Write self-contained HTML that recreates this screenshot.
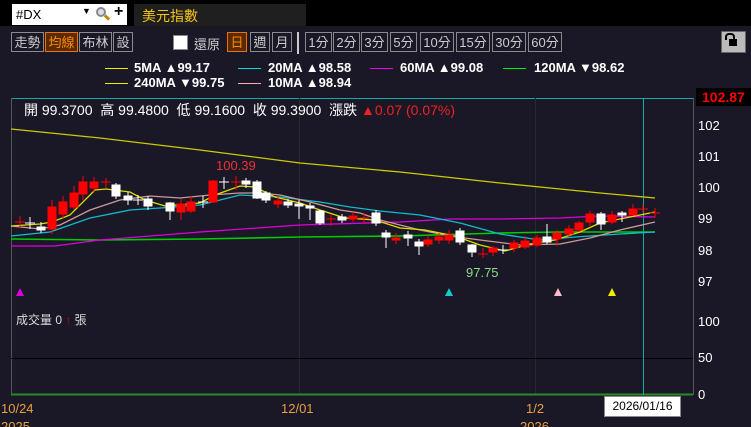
<!DOCTYPE html><html><head><meta charset="utf-8"><style>
body{margin:0;width:751px;height:427px;overflow:hidden;background:#1a1826;font-family:"Liberation Sans","Noto Sans CJK TC",sans-serif;}
.b{position:absolute;border:1px solid #8a8a8a;color:#ccc;font-size:13px;height:20px;line-height:20px;text-align:center;box-sizing:border-box;}
.t{position:absolute;color:#fff;font-size:13px;white-space:nowrap;}
.l{font-weight:bold;font-size:13px;}
</style></head><body>
<div style="position:absolute;left:0;top:0;width:751px;height:26px;background:#000"></div>
<div style="position:absolute;left:12px;top:4px;width:115px;height:21px;background:#fff;"></div>
<div class="t" style="left:16px;top:7px;color:#000;font-size:13px">#DX</div>
<div class="t" style="left:82px;top:6px;color:#000;font-size:9px">▼</div>
<div style="position:absolute;left:96px;top:7px;width:10px;height:10px;border:2px solid #888;border-radius:50%;box-sizing:border-box;background:#dde"></div>
<div style="position:absolute;left:104px;top:16px;width:6px;height:3px;background:#b80;transform:rotate(45deg)"></div>
<div class="t" style="left:114px;top:3px;color:#000;font-size:16px;font-weight:bold">+</div>
<div style="position:absolute;left:134px;top:4px;width:172px;height:22px;background:#1f1f1f"></div>
<div class="t" style="left:142px;top:6px;color:#f5c518;font-size:14px">美元指數</div>

<div class="b" style="left:11px;top:32px;width:33px">走勢</div>
<div class="b" style="left:45px;top:32px;width:33px;background:#5a2a00;border-color:#f07000;color:#ff8a00">均線</div>
<div class="b" style="left:79px;top:32px;width:33px">布林</div>
<div class="b" style="left:113px;top:32px;width:20px">設</div>
<div style="position:absolute;left:173px;top:35px;width:13px;height:13px;background:#fff;border:1px solid #888"></div>
<div class="t" style="left:194px;top:34px;color:#ccc">還原</div>
<div class="b" style="left:227px;top:32px;width:20px;background:#5a2a00;border-color:#f07000;color:#ff8a00">日</div>
<div class="b" style="left:250px;top:32px;width:20px">週</div>
<div class="b" style="left:272px;top:32px;width:20px">月</div>
<div style="position:absolute;left:297px;top:32px;width:2px;height:22px;background:#ccc"></div>
<div class="b" style="left:305px;top:32px;width:27px">1分</div>
<div class="b" style="left:333px;top:32px;width:27px">2分</div>
<div class="b" style="left:361px;top:32px;width:27px">3分</div>
<div class="b" style="left:390px;top:32px;width:27px">5分</div>
<div class="b" style="left:420px;top:32px;width:34px">10分</div>
<div class="b" style="left:456px;top:32px;width:34px">15分</div>
<div class="b" style="left:492px;top:32px;width:34px">30分</div>
<div class="b" style="left:528px;top:32px;width:34px">60分</div>
<div style="position:absolute;left:721px;top:31px;width:25px;height:22px;background:#bbb;border:1px solid #666;box-sizing:border-box"></div>
<div style="position:absolute;left:729px;top:39px;width:8px;height:7px;background:#000"></div>
<div style="position:absolute;left:725px;top:33px;width:6px;height:5px;border:2px solid #000;border-bottom:none;border-radius:4px 4px 0 0"></div>

<div style="position:absolute;left:105px;top:68px;width:23px;height:1px;background:#ee0"></div>
<div class="t l" style="left:134px;top:60px">5MA ▲99.17</div>
<div style="position:absolute;left:238px;top:68px;width:23px;height:1px;background:#0dd"></div>
<div class="t l" style="left:268px;top:60px">20MA ▲98.58</div>
<div style="position:absolute;left:370px;top:68px;width:23px;height:1px;background:#e0e"></div>
<div class="t l" style="left:400px;top:60px">60MA ▲99.08</div>
<div style="position:absolute;left:503px;top:68px;width:23px;height:1px;background:#0e0"></div>
<div class="t l" style="left:534px;top:60px">120MA ▼98.62</div>
<div style="position:absolute;left:105px;top:83px;width:23px;height:1px;background:#ee0"></div>
<div class="t l" style="left:134px;top:75px">240MA ▼99.75</div>
<div style="position:absolute;left:238px;top:83px;width:23px;height:1px;background:#fab"></div>
<div class="t l" style="left:268px;top:75px">10MA ▲98.94</div>

<svg style="position:absolute;left:0;top:0" width="751" height="427">
<line x1="11" y1="98.5" x2="693" y2="98.5" stroke="#1aa" />
<line x1="11.5" y1="98" x2="11.5" y2="395" stroke="#555"/>
<line x1="693.5" y1="98" x2="693.5" y2="395" stroke="#555"/>
<line x1="299.5" y1="98" x2="299.5" y2="395" stroke="#2a2a2a"/>
<line x1="535.5" y1="98" x2="535.5" y2="395" stroke="#2a2a2a"/>
<line x1="11" y1="358.5" x2="693" y2="358.5" stroke="#000"/>
<line x1="11" y1="394.5" x2="693" y2="394.5" stroke="#2a8a2a" stroke-width="2"/>
<line x1="643.5" y1="98" x2="643.5" y2="395" stroke="#1aa"/>
<g fill="none" stroke-width="1.3">
<polyline stroke="#cc0" points="11,129 100,138 200,150 300,163 400,172 500,183 550,188 600,193 655,198"/>
<polyline stroke="#0c0" stroke-width="1.6" points="11,239 100,240 200,239 300,237 400,236 500,233 560,232 655,232"/>
<polyline stroke="#d0d" points="11,246 55,246 100,240 200,232 300,225 400,222 450,219 500,219 560,218 600,216 655,217"/>
<polyline stroke="#1bc" points="11,236 50,232 90,218 130,210 160,208 200,205 240,195 280,197 320,202 350,207 380,211 420,215 460,223 500,234 540,240 575,237 620,234 655,232"/>
<polyline stroke="#c99" points="11,226 40,229 60,225 90,210 120,200 150,196 180,198 210,195 240,193 260,193 280,195 310,202 340,210 360,213 380,220 420,230 450,236 480,240 520,245 560,244 590,238 620,230 655,222"/>
<polyline stroke="#dd0" points="11,226 40,224 52,222 70,215 95,190 106,189 130,192 145,200 165,206 200,203 215,195 240,186 255,187 275,197 300,203 320,210 345,218 360,219 375,220 400,228 425,230 455,236 480,245 505,251 530,244 555,240 580,232 600,223 625,218 655,212"/>
</g>
<g stroke-width="1">
<g fill="#f00" stroke="#f00">
<line x1="20" y1="216" x2="20" y2="228"/><line x1="15" y1="222" x2="25" y2="222"/>
<line x1="52" y1="200" x2="52" y2="234"/><rect x="48" y="207" width="8" height="22"/>
<line x1="63" y1="196" x2="63" y2="219"/><rect x="59" y="202" width="8" height="12"/>
<line x1="74" y1="186" x2="74" y2="210"/><rect x="70" y="193" width="8" height="14"/>
<line x1="83" y1="176" x2="83" y2="200"/><rect x="79" y="182" width="8" height="12"/>
<line x1="94" y1="177" x2="94" y2="192"/><rect x="90" y="182" width="8" height="6"/>
<line x1="106" y1="178" x2="106" y2="188"/><line x1="101" y1="182" x2="111" y2="182"/>
<line x1="181" y1="199" x2="181" y2="220"/><rect x="177" y="204" width="8" height="8"/>
<line x1="191" y1="196" x2="191" y2="213"/><rect x="187" y="202" width="8" height="9"/>
<line x1="213" y1="180" x2="213" y2="203"/><rect x="209" y="181" width="8" height="21"/>
<line x1="236" y1="176" x2="236" y2="190"/><line x1="231" y1="182" x2="241" y2="182"/>
<line x1="278" y1="196" x2="278" y2="208"/><rect x="274" y="201" width="8" height="3"/>
<line x1="331" y1="214" x2="331" y2="226"/><line x1="326" y1="219" x2="336" y2="219"/>
<line x1="353" y1="212" x2="353" y2="222"/><rect x="349" y="216" width="8" height="3"/>
<line x1="364" y1="213" x2="364" y2="224"/><line x1="359" y1="218" x2="369" y2="218"/>
<line x1="396" y1="233" x2="396" y2="244"/><rect x="392" y="238" width="8" height="2"/>
<line x1="428" y1="235" x2="428" y2="247"/><rect x="424" y="240" width="8" height="4"/>
<line x1="439" y1="233" x2="439" y2="244"/><rect x="435" y="237" width="8" height="3"/>
<line x1="449" y1="230" x2="449" y2="244"/><rect x="445" y="235" width="8" height="5"/>
<line x1="483" y1="248" x2="483" y2="258"/><line x1="478" y1="254" x2="488" y2="254"/>
<line x1="493" y1="246" x2="493" y2="256"/><rect x="489" y="248" width="8" height="4"/>
<line x1="514" y1="240" x2="514" y2="252"/><rect x="510" y="243" width="8" height="5"/>
<line x1="525" y1="236" x2="525" y2="249"/><rect x="521" y="241" width="8" height="6"/>
<line x1="537" y1="235" x2="537" y2="247"/><rect x="533" y="238" width="8" height="7"/>
<line x1="557" y1="230" x2="557" y2="246"/><rect x="553" y="233" width="8" height="6"/>
<line x1="569" y1="225" x2="569" y2="237"/><rect x="565" y="229" width="8" height="5"/>
<line x1="579" y1="221" x2="579" y2="232"/><rect x="575" y="223" width="8" height="7"/>
<line x1="590" y1="211" x2="590" y2="226"/><rect x="586" y="214" width="8" height="8"/>
<line x1="612" y1="211" x2="612" y2="224"/><rect x="608" y="215" width="8" height="7"/>
<line x1="633" y1="204" x2="633" y2="216"/><rect x="629" y="209" width="8" height="6"/>
<line x1="643" y1="204" x2="643" y2="213"/><line x1="638" y1="209" x2="648" y2="209"/>
<line x1="655" y1="208" x2="655" y2="218"/><line x1="650" y1="213" x2="660" y2="213"/>
</g>
<g fill="#fff" stroke="#fff">
<line x1="30" y1="217" x2="30" y2="229"/><line x1="25" y1="223" x2="35" y2="223"/>
<line x1="41" y1="222" x2="41" y2="233"/><rect x="37" y="227" width="8" height="3"/>
<line x1="116" y1="183" x2="116" y2="199"/><rect x="112" y="185" width="8" height="11"/>
<line x1="128" y1="192" x2="128" y2="205"/><rect x="124" y="196" width="8" height="4"/>
<line x1="138" y1="195" x2="138" y2="205"/><line x1="133" y1="200" x2="143" y2="200"/>
<line x1="148" y1="196" x2="148" y2="210"/><rect x="144" y="199" width="8" height="7"/>
<line x1="170" y1="202" x2="170" y2="220"/><rect x="166" y="203" width="8" height="8"/>
<line x1="203" y1="196" x2="203" y2="208"/><line x1="198" y1="202" x2="208" y2="202"/>
<line x1="224" y1="177" x2="224" y2="189"/><line x1="219" y1="182" x2="229" y2="182"/>
<line x1="246" y1="178" x2="246" y2="188"/><rect x="242" y="181" width="8" height="3"/>
<line x1="257" y1="180" x2="257" y2="199"/><rect x="253" y="182" width="8" height="16"/>
<line x1="266" y1="191" x2="266" y2="203"/><rect x="262" y="193" width="8" height="7"/>
<line x1="288" y1="199" x2="288" y2="208"/><rect x="284" y="202" width="8" height="3"/>
<line x1="299" y1="200" x2="299" y2="219"/><rect x="295" y="204" width="8" height="2"/>
<line x1="310" y1="203" x2="310" y2="220"/><rect x="306" y="206" width="8" height="2"/>
<line x1="320" y1="210" x2="320" y2="225"/><rect x="316" y="211" width="8" height="12"/>
<line x1="342" y1="214" x2="342" y2="223"/><rect x="338" y="217" width="8" height="3"/>
<line x1="376" y1="210" x2="376" y2="226"/><rect x="372" y="213" width="8" height="10"/>
<line x1="386" y1="230" x2="386" y2="248"/><rect x="382" y="233" width="8" height="4"/>
<line x1="408" y1="231" x2="408" y2="246"/><rect x="404" y="235" width="8" height="3"/>
<line x1="419" y1="239" x2="419" y2="255"/><rect x="415" y="242" width="8" height="4"/>
<line x1="460" y1="228" x2="460" y2="245"/><rect x="456" y="231" width="8" height="11"/>
<line x1="472" y1="244" x2="472" y2="257"/><rect x="468" y="245" width="8" height="7"/>
<line x1="503" y1="245" x2="503" y2="254"/><line x1="498" y1="250" x2="508" y2="250"/>
<line x1="547" y1="224" x2="547" y2="244"/><rect x="543" y="237" width="8" height="5"/>
<line x1="601" y1="212" x2="601" y2="230"/><rect x="597" y="214" width="8" height="10"/>
<line x1="622" y1="211" x2="622" y2="222"/><rect x="618" y="213" width="8" height="2"/>
</g>
</g>
<polygon points="16,296 20,288 24,296" fill="#d0d"/>
<polygon points="445,296 449,288 453,296" fill="#1cc"/>
<polygon points="554,296 558,288 562,296" fill="#fbc"/>
<polygon points="608,296 612,288 616,296" fill="#ee0"/>
<text x="216" y="170" fill="#e33" font-size="13" font-family="Liberation Sans">100.39</text>
<text x="466" y="277" fill="#8d8" font-size="13" font-family="Liberation Sans">97.75</text>
<g fill="#fff" font-size="13" font-family="Liberation Sans">
<text x="698" y="130">102</text><text x="698" y="161">101</text><text x="698" y="192">100</text><text x="698" y="223">99</text><text x="698" y="255">98</text><text x="698" y="286">97</text>
<text x="698" y="326">100</text><text x="698" y="362">50</text><text x="698" y="399">0</text>
</g>
<g fill="#e8a040" font-size="13" font-family="Liberation Sans">
<text x="1" y="413">10/24</text><text x="281" y="413">12/01</text><text x="526" y="413">1/2</text>
<text x="1" y="431">2025</text><text x="520" y="431">2026</text>
</g>
</svg>
<div style="position:absolute;left:696px;top:88px;width:55px;height:18px;background:#000"></div>
<div class="t" style="left:702px;top:89px;color:#f00;font-weight:bold;font-size:14px">102.87</div>
<div class="t" style="left:24px;top:100px;font-size:14px">開 99.3700&nbsp; 高 99.4800&nbsp; 低 99.1600&nbsp; 收 99.3900&nbsp; 漲跌 <span style="color:#e22">▲0.07 (0.07%)</span></div>
<div class="t" style="left:16px;top:311px;color:#ddd;font-size:12px">成交量 0 <span style="color:#c00">↑</span> 張</div>
<div style="position:absolute;left:604px;top:396px;width:77px;height:21px;background:#fff;border:1px solid #888;box-sizing:border-box;font-size:12px;line-height:19px;text-align:center;color:#000">2026/01/16</div>
</body></html>
